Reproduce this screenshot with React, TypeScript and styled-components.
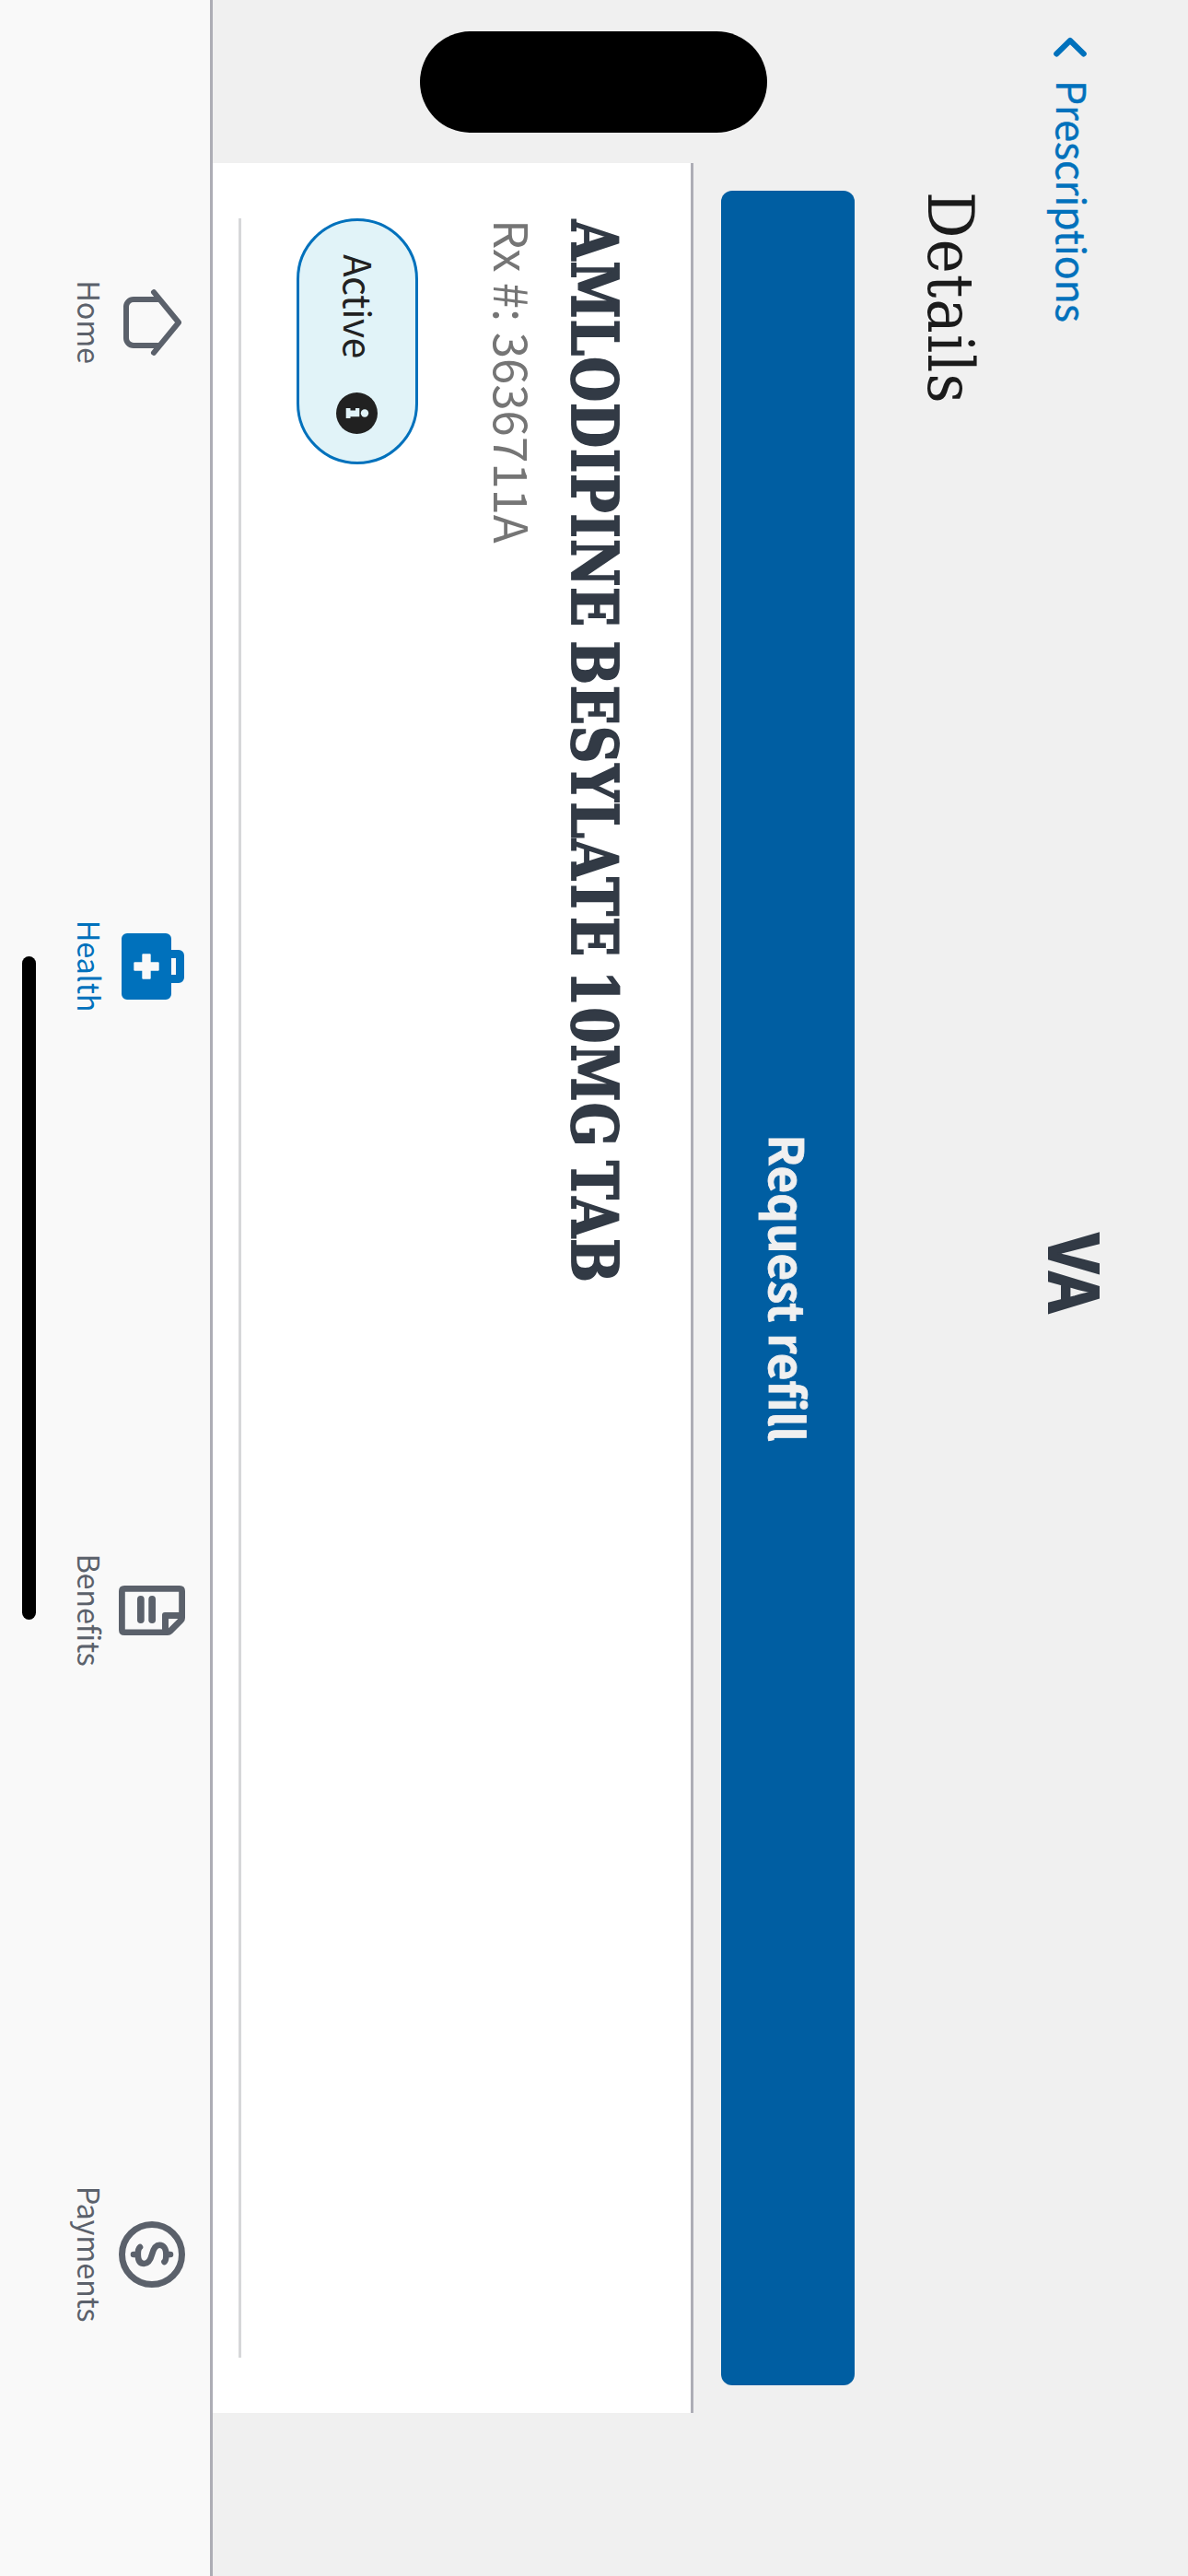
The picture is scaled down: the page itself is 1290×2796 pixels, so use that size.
import React from "react";
import styled, { createGlobalStyle } from "styled-components";

const sans = `"Noto Sans CJK JP", "Noto Sans", sans-serif`;
const serif = `"DejaVu Serif Condensed", "DejaVu Serif", serif`;

const GlobalStyle = createGlobalStyle`
  * { box-sizing: border-box; }
  body { margin: 0; background: #f0f0f0; }
`;

const Device = styled.div`
  width: 1290px;
  height: 2796px;
  overflow: hidden;
`;

/* The phone is held in landscape; the screen is turned a quarter clockwise. */
const Screen = styled.div`
  position: relative;
  display: flex;
  flex-direction: column;
  width: 2796px;
  height: 1290px;
  background: #f0f0f0;
  font-family: ${sans};
  white-space: nowrap;
  transform-origin: 0 0;
  transform: translateX(1290px) rotate(90deg);
`;

const Island = styled.div`
  position: absolute;
  left: 34px;
  top: 457px;
  width: 110px;
  height: 377px;
  border-radius: 55px;
  background: #000;
`;

const HomeIndicator = styled.div`
  position: absolute;
  left: 1038px;
  top: 1251px;
  width: 720px;
  height: 15px;
  border-radius: 8px;
  background: #000;
`;

const Header = styled.header`
  display: grid;
  grid-template-columns: 1339px auto;
  align-items: start;
  height: 212px;
  padding-top: 94px;
`;

const BackLink = styled.a`
  display: flex;
  align-items: center;
  gap: 24px;
  padding-left: 40px;
  color: #0071bc;
  font-size: 43px;
  line-height: 60px;
  letter-spacing: -0.1px;
  -webkit-text-stroke: 0.4px #0071bc;

  svg {
    margin-top: 8px;
  }
`;

const Logo = styled.div`
  color: #323a45;
  font-size: 73px;
  font-weight: 700;
  line-height: 50px;
  -webkit-text-stroke: 2px #323a45;
  transform-origin: 0 50%;
  transform: scaleX(0.95);
`;

const PageTitle = styled.h1`
  margin: 0 0 0 208px;
  height: 150px;
  color: #1b1b1b;
  font-family: ${serif};
  font-size: 70px;
  font-weight: 400;
  line-height: 92px;
  letter-spacing: 1.1px;
`;

const RefillButton = styled.button`
  width: 2382px;
  height: 145px;
  margin: 0 0 30px 207px;
  padding: 0 0 3px;
  border: 0;
  border-radius: 12px;
  background: #005ea2;
  color: #f0f0f0;
  font-family: ${sans};
  font-size: 51px;
  font-weight: 700;
  line-height: 72px;
  -webkit-text-stroke: 0.8px #f0f0f0;
`;

const Card = styled.section`
  width: 2442px;
  height: 522px;
  margin-left: 177px;
  padding: 57px 60px 0;
  border-top: 3px solid #adadb5;
  background: #fff;
`;

const DrugName = styled.h2`
  margin: 0 0 3px;
  padding-left: 2px;
  color: #323a45;
  font-family: ${serif};
  font-size: 69px;
  font-weight: 700;
  line-height: 96px;
  letter-spacing: 1.2px;
  word-spacing: -7px;
  -webkit-text-stroke: 1.8px #323a45;
  transform-origin: 0 50%;
  transform: scaleX(0.904);
`;

const RxNumber = styled.p`
  margin: 0;
  padding-left: 1px;
  color: #757575;
  font-size: 51px;
  line-height: 72px;
`;

const StatusPill = styled.div`
  display: flex;
  align-items: center;
  justify-content: space-between;
  width: 267px;
  height: 132px;
  margin-top: 68px;
  padding: 0 30px 0 36px;
  border: 3px solid #0071bc;
  border-radius: 66px;
  background: #e1f3f8;
  color: #212121;
`;

const StatusText = styled.span`
  padding-bottom: 5px;
  font-size: 40.5px;
  line-height: 60px;
  letter-spacing: -0.3px;
`;

const Divider = styled.hr`
  height: 3px;
  margin: 60px 0 0;
  border: 0;
  background: #d6d7d9;
`;

const TabBar = styled.nav`
  display: grid;
  grid-template-columns: repeat(4, 699px);
  height: 231px;
  border-top: 3px solid #adadb5;
  background: #f9f9f9;
`;

const Tab = styled.div<{ $active?: boolean }>`
  display: flex;
  flex-direction: column;
  align-items: center;
  gap: 11px;
  padding-top: 27px;
  color: ${(p) => (p.$active ? "#0071bc" : "#5b616b")};
  font-size: 32.5px;
  line-height: 40px;
  letter-spacing: -0.2px;
`;

const TabIcon = styled.svg.attrs({ viewBox: "0 0 72 72" })`
  display: block;
  width: 72px;
  height: 72px;
`;

const HomeIcon = () => (
  <TabIcon fill="none" stroke="currentColor" strokeWidth="6" strokeLinecap="round" strokeLinejoin="round">
    <path d="M3.2 34 36 7l32.8 27" />
    <path d="M11 29v27a8 8 0 0 0 8 8h34a8 8 0 0 0 8-8V29" />
  </TabIcon>
);

const HealthIcon = () => (
  <TabIcon fill="currentColor" fillRule="evenodd">
    <path d="M24 1h24a6 6 0 0 1 6 6v8h12a6 6 0 0 1 6 6v42a6 6 0 0 1-6 6H6a6 6 0 0 1-6-6V21a6 6 0 0 1 6-6h12V7a6 6 0 0 1 6-6zM27 10v5h18v-5zM32.3 28.3a1 1 0 0 0-1 1v8h-8a1 1 0 0 0-1 1v7.4a1 1 0 0 0 1 1h8v8a1 1 0 0 0 1 1h7.4a1 1 0 0 0 1-1v-8h8a1 1 0 0 0 1-1v-7.4a1 1 0 0 0-1-1h-8v-8a1 1 0 0 0-1-1z" />
  </TabIcon>
);

const BenefitsIcon = () => (
  <TabIcon fill="currentColor" fillRule="evenodd">
    <path d="M15 0h29q3 0 5 2l12 12q2 2 2 5v47q0 6-6 6H15q-6 0-6-6V6q0-6 6-6zM15.8 6.8v58.4h40.6V25H41q-3 0-3-3V6.8zM45 7.7V18h10.3z" />
    <rect x="20" y="32" width="30" height="7.7" rx="3.8" />
    <rect x="20" y="44.3" width="30" height="7.7" rx="3.8" />
  </TabIcon>
);

const PaymentsIcon = () => (
  <TabIcon fill="none" stroke="currentColor" strokeWidth="6.6" strokeLinecap="round">
    <circle cx="36" cy="36" r="32.5" strokeWidth="7" />
    <path d="M44 22.5C42.5 20.8 39.5 20.6 36 20.6C29.5 20.6 25.8 23.6 25.8 27.8C25.8 32.5 30 34.4 36 36C42 37.6 46 39.8 46 44.5C46 49 42.3 51.2 36 51.2C32 51.2 29.6 51 28 49" />
    <path d="M36 16v4M36 52v4" />
  </TabIcon>
);

const Chevron = () => (
  <svg width="23" height="36" viewBox="0 0 23 36" fill="none" stroke="currentColor" strokeWidth="6" strokeLinecap="round" strokeLinejoin="round">
    <path d="M18.5 3.2 4 18l14.500 14.800" />
  </svg>
);

const InfoIcon = () => (
  <svg width="45" height="45" viewBox="0 0 45 45">
    <circle cx="22.500" cy="22.500" r="22.500" fill="#212121" />
    <circle cx="22.500" cy="14" r="4.200" fill="#e1f3f8" />
    <path fill="#e1f3f8" d="M17 19.700h9.300v9.800H28v4.800H17v-4.800h2.500v-5.500H17z" />
  </svg>
);

export default function App() {
  return (
    <Device>
      <GlobalStyle />
      <Screen>
        <Header>
          <BackLink>
            <Chevron />
            <span>Prescriptions</span>
          </BackLink>
          <Logo>VA</Logo>
        </Header>
        <PageTitle>Details</PageTitle>
        <RefillButton>Request refill</RefillButton>
        <Card>
          <DrugName>AMLODIPINE BESYLATE 10MG TAB</DrugName>
          <RxNumber>Rx #: 3636711A</RxNumber>
          <StatusPill>
            <StatusText>Active</StatusText>
            <InfoIcon />
          </StatusPill>
          <Divider />
        </Card>
        <TabBar>
          <Tab>
            <HomeIcon />
            <span>Home</span>
          </Tab>
          <Tab $active>
            <HealthIcon />
            <span>Health</span>
          </Tab>
          <Tab>
            <BenefitsIcon />
            <span>Benefits</span>
          </Tab>
          <Tab>
            <PaymentsIcon />
            <span>Payments</span>
          </Tab>
        </TabBar>
        <Island />
        <HomeIndicator />
      </Screen>
    </Device>
  );
}
